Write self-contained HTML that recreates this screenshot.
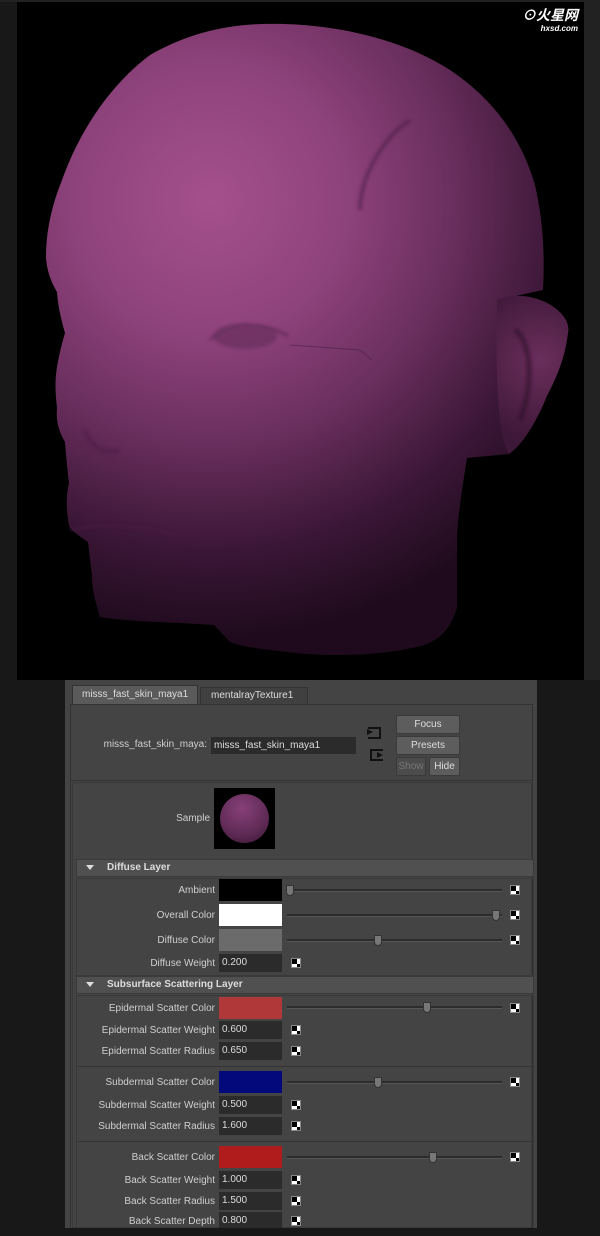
<!DOCTYPE html>
<html><head><meta charset="utf-8"><style>
*{margin:0;padding:0;box-sizing:border-box}
body{width:600px;height:1236px;background:#181818;position:relative;overflow:hidden;font-family:"Liberation Sans",sans-serif;font-size:10px;color:#cfcfcf}
.a{position:absolute}
.lbl{position:absolute;right:385px;text-align:right;white-space:nowrap;font-size:10px;color:#cfcfcf}
.sw{position:absolute;left:219px;width:63px;height:22px}
.fld{position:absolute;left:219px;width:63px;height:18px;background:#2b2b2b;color:#ddd;padding-left:3px;line-height:18px;font-size:10px}
.sl{position:absolute;left:287px;width:215px;height:3px;background:#2c2c2c;border-bottom:1px solid #555}
.th{position:absolute;width:8px;height:11px;background:#777;border:1px solid #333;border-radius:1px 1px 4px 4px}
.ck{position:absolute;width:10px;height:10px;background:
linear-gradient(#000,#000) 0 0/5px 5px no-repeat,linear-gradient(#000,#000) 5px 5px/5px 5px no-repeat,#fff;border:1px solid #888}
.btn{position:absolute;background:#5d5d5d;border:1px solid #3a3a3a;color:#ddd;text-align:center;font-size:10px;line-height:17px;border-radius:2px}
.hdr{position:absolute;left:76px;width:458px;height:18px;background:#505050;border:1px solid #3a3a3a;font-weight:bold;color:#ddd;font-size:10px;line-height:16px;padding-left:30px}
.hdr:before{content:"";position:absolute;left:9px;top:5px;border-left:4px solid transparent;border-right:4px solid transparent;border-top:5px solid #ddd}
</style></head><body>
<div class="a" style="left:0;top:0;width:600px;height:2px;background:#222"></div>
<svg class="a" style="left:17px;top:2px" width="567" height="678" viewBox="17 2 567 678">
<defs>
<radialGradient id="g" cx="210" cy="200" r="440" gradientUnits="userSpaceOnUse">
<stop offset="0" stop-color="#a4508d"/><stop offset="0.3" stop-color="#8f437c"/>
<stop offset="0.55" stop-color="#6a2f5e"/><stop offset="0.8" stop-color="#3a1636"/><stop offset="1" stop-color="#1e0a1c"/>
</radialGradient>
<radialGradient id="e" cx="540" cy="360" r="80" gradientUnits="userSpaceOnUse">
<stop offset="0" stop-color="#6a2e5c"/><stop offset="1" stop-color="#3e1838"/></radialGradient>
<filter id="b"><feGaussianBlur stdDeviation="1.5"/></filter>
</defs>
<rect x="17" y="2" width="567" height="678" fill="#000"/>
<path fill="url(#g)" d="M262 24 C330 22 400 38 450 70 C495 100 522 140 535 185 C543 220 545 255 543 290 L497 300 C505 330 500 400 509 454 L467 458 C462 490 457 520 457 542 L457 608 C450 630 440 640 421 646 C380 656 340 656 306 654 C270 650 245 648 230 642 L214 625 C170 622 130 622 100 617 C95 600 92 590 92 575 C90 560 89 550 88 542 C78 535 70 530 69 525 C66 510 66 495 69 483 C67 465 66 455 65 442 C58 430 56 420 57 408 C55 390 55 380 57 367 C60 350 63 340 65 333 C60 315 58 305 57 292 C50 280 47 270 46 258 C46 230 52 205 62 180 C80 130 110 85 150 55 C185 35 222 25 262 24Z"/>
<path fill="url(#e)" d="M497 300 C520 290 545 300 555 308 C565 315 570 325 568 333 C565 360 555 380 547 396 C535 425 522 445 509 454 C500 440 495 400 497 300Z"/>
<g filter="url(#b)" fill="none" opacity=".55">
<path d="M515 330 C530 340 535 380 520 420" stroke="#2c1028" stroke-width="5"/>
<ellipse cx="245" cy="336" rx="32" ry="13" fill="#5e2a55" stroke="none"/>
<path d="M210 340 C230 322 260 320 288 336" stroke="#4e2248" stroke-width="3"/>
<path d="M70 530 C100 522 140 525 175 535" stroke="#4a1e44" stroke-width="3"/>
<path d="M410 120 C380 140 360 180 360 210" stroke="#4a1e44" stroke-width="4"/>
<path d="M85 430 C90 445 100 455 120 450" stroke="#4a1e44" stroke-width="4"/>
</g>
<path d="M290 345 L360 350 L372 360" stroke="#4a1e44" stroke-width="1" fill="none" opacity=".6"/>
<text x="578" y="20" text-anchor="end" fill="#fff" font-family="Liberation Sans,Noto Sans CJK SC,sans-serif" font-size="14" font-weight="bold" font-style="italic">⊙火星网</text>
<text x="578" y="31" text-anchor="end" fill="#fff" font-family="Liberation Sans,sans-serif" font-size="8" font-weight="bold" font-style="italic">hxsd.com</text>
</svg>
<div class="a" style="left:584px;top:0;width:16px;height:680px;background:#222"></div>

<div class="a" style="left:65px;top:680px;width:472px;height:548px;background:#444"></div>
<div class="a" style="left:70px;top:704px;width:463px;height:524px;border:1px solid #333;border-bottom:none"></div>
<div class="a" style="left:72px;top:685px;width:126px;height:20px;background:#5a5a5a;border:1px solid #333;color:#ddd;line-height:18px;padding-left:9px">misss_fast_skin_maya1</div>
<div class="a" style="left:200px;top:687px;width:108px;height:18px;background:#404040;border:1px solid #333;color:#ddd;line-height:16px;padding-left:10px">mentalrayTexture1</div>
<div class="lbl" style="right:393px;top:739px">misss_fast_skin_maya:</div>
<div class="a" style="left:211px;top:737px;width:145px;height:17px;background:#2b2b2b;color:#ddd;line-height:17px;padding-left:3px">misss_fast_skin_maya1</div>
<div class="a" style="left:368px;top:727px;width:13px;height:12px;border:2px solid #111;border-left:none"></div>
<div class="a" style="left:367px;top:729px;border-left:6px solid #111;border-top:3px solid transparent;border-bottom:3px solid transparent"></div>
<div class="a" style="left:370px;top:749px;width:13px;height:12px;border:2px solid #111;border-right:none"></div>
<div class="a" style="left:377px;top:752px;border-left:6px solid #111;border-top:3px solid transparent;border-bottom:3px solid transparent"></div>
<div class="btn" style="left:396px;top:715px;width:64px;height:19px">Focus</div>
<div class="btn" style="left:396px;top:736px;width:64px;height:19px">Presets</div>
<div class="btn" style="left:396px;top:757px;width:30px;height:19px;color:#777;background:#4c4c4c">Show</div>
<div class="btn" style="left:429px;top:757px;width:31px;height:19px">Hide</div>
<div class="a" style="left:71px;top:780px;width:461px;height:1px;background:#333"></div>
<div class="a" style="left:72px;top:782px;width:460px;height:446px;border:1px solid #393939"></div>
<div class="lbl" style="right:390px;top:813px">Sample</div>
<div class="a" style="left:214px;top:788px;width:61px;height:61px;background:#000"></div>
<div class="a" style="left:220px;top:794px;width:49px;height:49px;border-radius:50%;background:radial-gradient(circle at 45% 30%,#874078,#5e2a55 60%,#341430)"></div>

<div class="hdr" style="top:859px">Diffuse Layer</div>
<div class="a" style="left:76px;top:878px;width:458px;height:98px;border:1px solid #393939"></div>
<div class="hdr" style="top:976px">Subsurface Scattering Layer</div>
<div class="a" style="left:76px;top:995px;width:458px;height:240px;border:1px solid #393939"></div>
<div class="a" style="left:77px;top:1066px;width:456px;height:1px;background:#333"></div>
<div class="a" style="left:77px;top:1141px;width:456px;height:1px;background:#333"></div>

<div class="lbl" style="top:885px">Ambient</div><div class="sw" style="top:879px;background:#000"></div>
<div class="sl" style="top:889px"></div><div class="th" style="left:286px;top:885px"></div><div class="ck" style="left:510px;top:885px"></div>
<div class="lbl" style="top:910px">Overall Color</div><div class="sw" style="top:904px;background:#fff"></div>
<div class="sl" style="top:914px"></div><div class="th" style="left:492px;top:910px"></div><div class="ck" style="left:510px;top:910px"></div>
<div class="lbl" style="top:935px">Diffuse Color</div><div class="sw" style="top:929px;background:#6b6b6b"></div>
<div class="sl" style="top:939px"></div><div class="th" style="left:374px;top:935px"></div><div class="ck" style="left:510px;top:935px"></div>
<div class="lbl" style="top:958px">Diffuse Weight</div><div class="fld" style="top:954px">0.200</div><div class="ck" style="left:291px;top:958px"></div>

<div class="lbl" style="top:1003px">Epidermal Scatter Color</div><div class="sw" style="top:997px;background:#b03838"></div>
<div class="sl" style="top:1006px"></div><div class="th" style="left:423px;top:1002px"></div><div class="ck" style="left:510px;top:1003px"></div>
<div class="lbl" style="top:1025px">Epidermal Scatter Weight</div><div class="fld" style="top:1021px">0.600</div><div class="ck" style="left:291px;top:1025px"></div>
<div class="lbl" style="top:1046px">Epidermal Scatter Radius</div><div class="fld" style="top:1042px">0.650</div><div class="ck" style="left:291px;top:1046px"></div>

<div class="lbl" style="top:1077px">Subdermal Scatter Color</div><div class="sw" style="top:1071px;background:#03087a"></div>
<div class="sl" style="top:1081px"></div><div class="th" style="left:374px;top:1077px"></div><div class="ck" style="left:510px;top:1077px"></div>
<div class="lbl" style="top:1100px">Subdermal Scatter Weight</div><div class="fld" style="top:1096px">0.500</div><div class="ck" style="left:291px;top:1100px"></div>
<div class="lbl" style="top:1121px">Subdermal Scatter Radius</div><div class="fld" style="top:1117px">1.600</div><div class="ck" style="left:291px;top:1121px"></div>

<div class="lbl" style="top:1152px">Back Scatter Color</div><div class="sw" style="top:1146px;background:#b01c1c"></div>
<div class="sl" style="top:1156px"></div><div class="th" style="left:429px;top:1152px"></div><div class="ck" style="left:510px;top:1152px"></div>
<div class="lbl" style="top:1175px">Back Scatter Weight</div><div class="fld" style="top:1171px">1.000</div><div class="ck" style="left:291px;top:1175px"></div>
<div class="lbl" style="top:1196px">Back Scatter Radius</div><div class="fld" style="top:1192px">1.500</div><div class="ck" style="left:291px;top:1196px"></div>
<div class="lbl" style="top:1216px">Back Scatter Depth</div><div class="fld" style="top:1212px">0.800</div><div class="ck" style="left:291px;top:1216px"></div>
<div class="a" style="left:0;top:1228px;width:600px;height:8px;background:#181818"></div>
</body></html>
